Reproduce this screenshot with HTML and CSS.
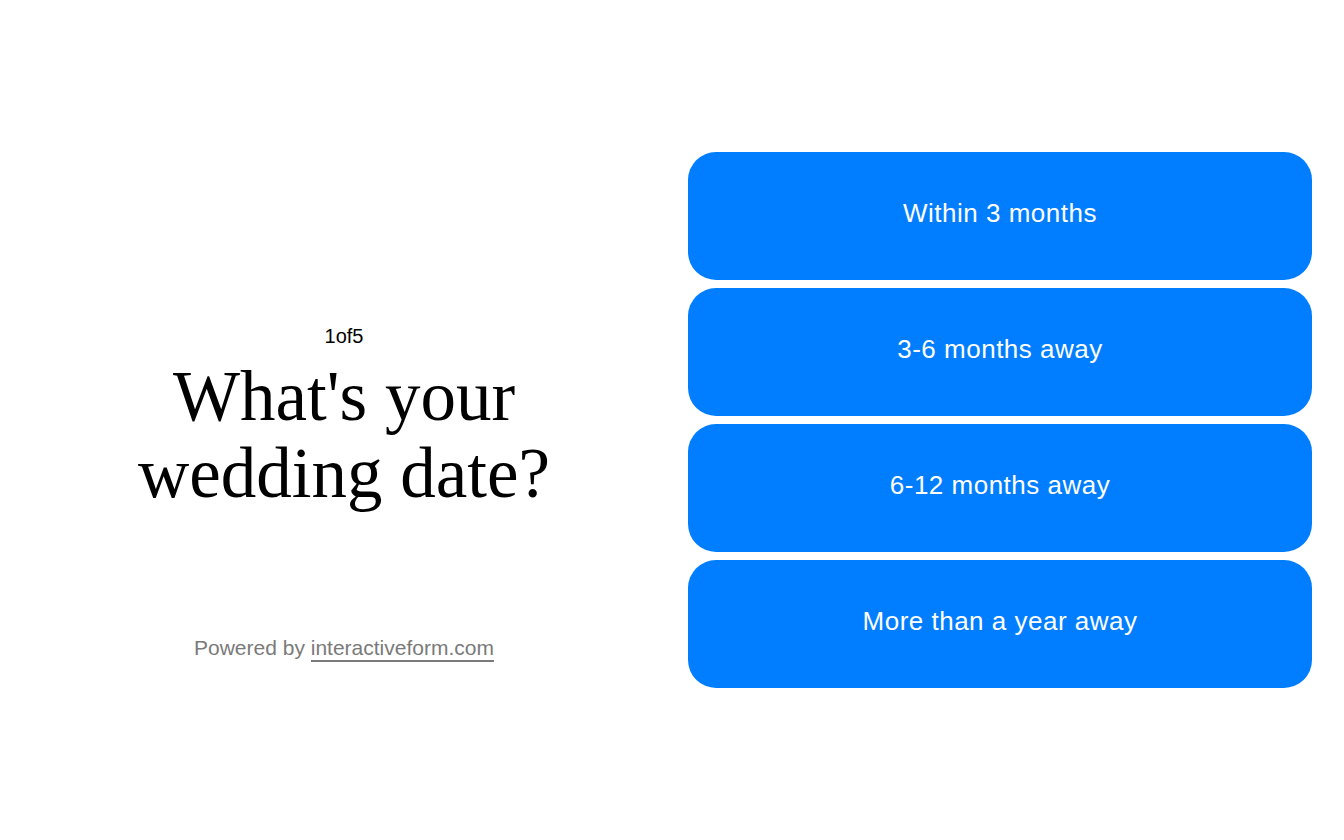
FILE: index.html
```html
<!DOCTYPE html>
<html lang="en">
<head>
<meta charset="utf-8">
<title>What's your wedding date?</title>
<link rel="stylesheet" href="styles.css">
</head>
<body>
<main class="page">
  <section class="intro">
    <div class="question">
      <div class="step">1of5</div>
      <h1 class="title">What's your wedding date?</h1>
    </div>
    <p class="powered">Powered by <a class="powered-link" href="#">interactiveform.com</a></p>
  </section>
  <section class="options">
    <button class="option">Within 3 months</button>
    <button class="option">3-6 months away</button>
    <button class="option">6-12 months away</button>
    <button class="option">More than a year away</button>
  </section>
</main>
</body>
</html>
```
FILE: styles.css
```css
html, body {
  margin: 0;
  padding: 0;
  background: #ffffff;
}
.page {
  height: 840px;
  box-sizing: border-box;
  padding: 0 32px;
  display: grid;
  grid-template-columns: 1fr 1fr;
  column-gap: 32px;
  align-items: center;
}
.intro {
  display: flex;
  flex-direction: column;
  align-items: center;
  text-align: center;
  padding-top: 144px;
}
.question {
  display: flex;
  flex-direction: column;
  align-items: center;
}
.step {
  font-family: "Liberation Sans", Arial, sans-serif;
  font-size: 20px;
  letter-spacing: 0;
  color: #000;
  line-height: 22px;
}
.title {
  margin: 11px 0 0;
  font-family: "Liberation Serif", "Times New Roman", serif;
  font-weight: normal;
  font-size: 71px;
  line-height: 77px;
  color: #000;
  width: 440px;
}
.powered {
  margin: 124px 0 0;
  font-family: "Liberation Sans", Arial, sans-serif;
  font-size: 21px;
  letter-spacing: 0;
  color: #7a7a7a;
  line-height: 24px;
}
.powered-link {
  color: #7a7a7a;
  text-decoration: none;
  border-bottom: 2px solid #7a7a7a;
  padding-bottom: 1px;
}
.options {
  display: flex;
  flex-direction: column;
  gap: 8px;
}
.option {
  height: 128px;
  border: none;
  border-radius: 28px;
  background: #007eff;
  color: #ffffff;
  font-family: "Liberation Sans", Arial, sans-serif;
  font-size: 26px;
  letter-spacing: 0.5px;
  cursor: pointer;
  padding: 0 24px 6px;
}
```
